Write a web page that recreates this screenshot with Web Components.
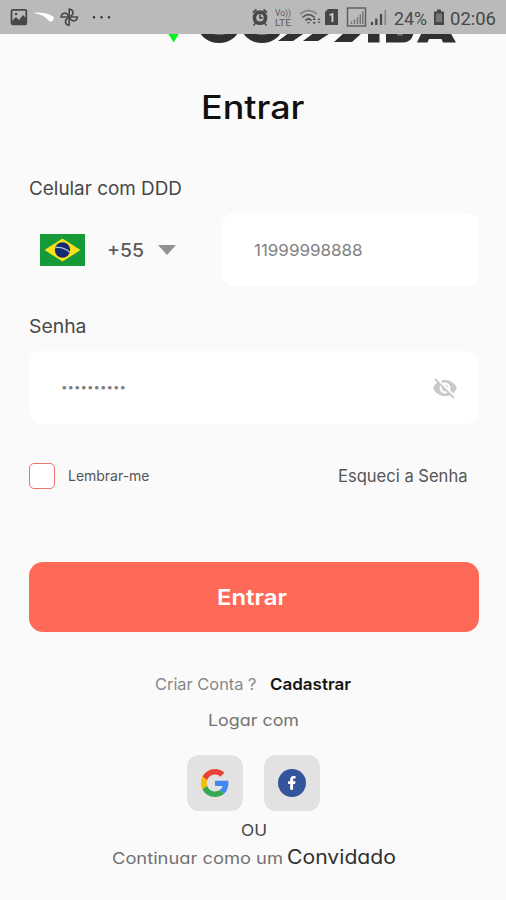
<!DOCTYPE html>
<html lang="pt-BR">
<head>
<meta charset="utf-8">
<meta name="viewport" content="width=device-width, initial-scale=1">
<title>Entrar</title>
<style>
    body{
        margin: 0;
        background: #fafafa;
        font-family: Inter, "Liberation Sans", sans-serif;
    }
</style>
</head>
<body>
<login-page></login-page>

<script>
// one line of text, widened so that it fills the given width
class TextLine extends HTMLElement{
    constructor(){
        super();
        this.attachShadow({ mode: 'open' });
    }

    connectedCallback(){
        this.shadowRoot.innerHTML = `
            <style>
                :host{
                    display: inline-block;
                    white-space: nowrap;
                    flex: none;
                    width: ${this.getAttribute("width")}px;
                    font-size: ${this.getAttribute("size")}px;
                }
                :host([round]){
                    font-feature-settings: "cv11" 1;
                }
                span{
                    display: inline-block;
                    transform-origin: 0 50%;
                }
            </style>
            <span><slot></slot></span>
        `;
        let span = this.shadowRoot.querySelector("span");
        let ratio = Number(this.getAttribute("width")) / span.getBoundingClientRect().width;
        span.style.transform = `scaleX(${ratio})`;
    }
}

class StatusBar extends HTMLElement{
    constructor(){
        super();
        this.attachShadow({ mode: 'open' });
    }

    connectedCallback(){
        this.shadowRoot.innerHTML = `
            <style>
                :host{
                    display: flex;
                    justify-content: space-between;
                    height: 34px;
                    box-sizing: border-box;
                    background: #bababa;
                    color: #484848;
                    position: relative;
                    z-index: 1;
                    font-family: Roboto, "Liberation Sans", sans-serif;
                }
                svg{ display: block; }
                .right{ display: flex; padding-right: 10px; }
                .right text-line{ line-height: 37px; }
                .percent{ margin-left: 6px; }
                .battery{ margin: 0 5px 0 6px; }
            </style>
            <svg width="120" height="34" viewBox="0 0 120 34">
                <rect x="11.5" y="9.8" width="14.8" height="14.6" rx="1.3" fill="none" stroke="#484848" stroke-width="1.8"/>
                <path d="M12 21 16 17 19 20 23 15 26 18v6H12z" fill="#484848"/>
                <circle cx="16" cy="14" r="1.3" fill="#484848"/>
                <path d="M35 12.4C43 12.500 50.500 13.500 53.600 17C54.500 20 51 23.500 48.500 20.500C45 16 40 14.300 35 13.200z" fill="#fff"/>
                <g fill="none" stroke="#484848" stroke-width="1.6" stroke-linejoin="round">
                    <path d="M69.200 17V9C73.500 9.500 74.500 14 70.500 16.300"/>
                    <path d="M69.200 17H77.500C77 21.300 72.500 22.300 69.700 18.300"/>
                    <path d="M69.200 17V25.300C65 24.800 64 20.300 68 17.800"/>
                    <path d="M69.200 17H61C61.500 12.700 66 11.700 68.700 15.700"/>
                </g>
                <g fill="#333"><circle cx="94" cy="17.200" r="1.200"/><circle cx="101.500" cy="17.200" r="1.200"/><circle cx="109" cy="17.200" r="1.200"/></g>
            </svg>
            <div class="right">
                <svg width="137" height="34" viewBox="251 0 137 34">
                    <circle cx="260" cy="17.700" r="5.600" fill="none" stroke="#484848" stroke-width="3.600"/>
                    <path d="M260 14.500V18H263M253 12.500 256.500 9.500M267 12.500 263.500 9.500M255.500 23 253.500 25.500M264.500 23 266.500 25.500" fill="none" stroke="#484848" stroke-width="1.700"/>
                    <g fill="#5a5a5a" font-family="Roboto, sans-serif" font-size="8.5">
                        <text x="275" y="16" textLength="16" lengthAdjust="spacingAndGlyphs">Vo))</text>
                        <text x="275" y="26" textLength="16" lengthAdjust="spacingAndGlyphs">LTE</text>
                    </g>
                    <g fill="none" stroke="#555" stroke-width="1.700">
                        <path d="M300 14Q308.500 7 317 14" stroke="#868686"/>
                        <path d="M302.500 17.300Q308.500 12 314.500 17.300"/>
                        <path d="M305.300 20.500Q308.500 17.500 311.700 20.500"/>
                    </g>
                    <path d="M307 22 308.500 24 310 22zM312.500 20 314.300 17.500 316 20zM312.500 22 314.300 24.500 316 22zM317.500 20 319 18 320.500 20zM317.500 21.500 319 23.500 320.500 21.500z" fill="#555"/>
                    <path d="M328 9H338V25H325V12z" fill="#484848"/>
                    <text x="328.500" y="21.500" fill="#d4d4d4" font-family="Roboto, sans-serif" font-size="12" font-weight="700">1</text>
                    <rect x="347.500" y="8" width="18" height="18" fill="none" stroke="#5d5d5d" stroke-width="1.400"/>
                    <path d="M351.500 24V21.500M354.500 24V19.500M357.500 24V17M360.300 24V14.500M362.800 24V11.500" stroke="#777" stroke-width="1.500"/>
                    <path d="M372 25V22M376.300 25V18.500M381 25V14" stroke="#484848" stroke-width="2.200"/>
                    <path d="M385.300 25V10" stroke="#858585" stroke-width="1.700"/>
                </svg>
                <text-line class="percent" size="19" width="33">24%</text-line>
                <svg class="battery" width="12" height="34" viewBox="0 0 12 34">
                    <path d="M4 9.500H8V11.500H11V25H1V11.500H4z" fill="#484848"/>
                    <path d="M3 13.500H9V22H3z" fill="#777"/>
                </svg>
                <text-line size="19" width="46">02:06</text-line>
            </div>
        `;
    }
}

// wordmark scrolled up underneath the status bar
class BrandLogo extends HTMLElement{
    constructor(){
        super();
        this.attachShadow({ mode: 'open' });
    }

    connectedCallback(){
        this.shadowRoot.innerHTML = `
            <style>
                :host{ display: block; height: 12px; overflow: hidden; }
                svg{ display: block; }
            </style>
            <svg width="506" height="12" viewBox="0 34 506 12">
                <path d="M168 33.500H179L173.700 42.500z" fill="#00f51c"/>
                <g fill="#303030">
                    <ellipse cx="219" cy="25" rx="21" ry="18"/>
                    <ellipse cx="262" cy="25" rx="21" ry="18"/>
                    <path d="M290 32H306L293 41H278zM315 32H332L318 41H303zM345 32H363L352 42H334z"/>
                    <path d="M368 30H379.500V42.500H368zM386 30H414Q413 42.500 403 42.500H386z"/>
                    <path d="M422 32H450L456 42.500H443L441.500 39H429L427.500 42.500H417z"/>
                </g>
                <path d="M213 34H226Q220 36 213 34zM256 34H268Q262 36 256 34zM397 34H403V35.500H397z" fill="#777"/>
            </svg>
        `;
    }
}

class FieldBox extends HTMLElement{
    constructor(){
        super();
        this.attachShadow({ mode: 'open' });
    }

    connectedCallback(){
        this.shadowRoot.innerHTML = `
            <style>
                :host{
                    display: flex;
                    align-items: center;
                    justify-content: space-between;
                    box-sizing: border-box;
                    height: 73px;
                    padding: 0 21px 0 32px;
                    border-radius: 12px;
                    background: #fff;
                    color: #818181;
                }
            </style>
            <slot></slot>
            <slot name="icon"></slot>
        `;
    }
}

class CheckOption extends HTMLElement{
    constructor(){
        super();
        this.attachShadow({ mode: 'open' });
    }

    connectedCallback(){
        this.shadowRoot.innerHTML = `
            <style>
                :host{ display: flex; align-items: center; gap: 13px; }
                i{
                    box-sizing: border-box;
                    width: 26px;
                    height: 26px;
                    border: 1.5px solid #ec7469;
                    border-radius: 5px;
                    background: #fff;
                }
            </style>
            <i></i><slot></slot>
        `;
    }
}

class MainButton extends HTMLElement{
    constructor(){
        super();
        this.attachShadow({ mode: 'open' });
    }

    connectedCallback(){
        this.shadowRoot.innerHTML = `
            <style>
                :host{ display: block; }
                button{
                    display: flex;
                    align-items: center;
                    justify-content: center;
                    width: 100%;
                    height: 70px;
                    padding: 0 2px 0 0;
                    border: 0;
                    border-radius: 14px;
                    background: #ff6a58;
                    color: #fff;
                    font: inherit;
                    font-weight: 600;
                    text-align: left;
                    cursor: pointer;
                }
            </style>
            <button><slot></slot></button>
        `;
    }
}

class SocialTile extends HTMLElement{
    constructor(){
        super();
        this.attachShadow({ mode: 'open' });
    }

    connectedCallback(){
        this.shadowRoot.innerHTML = `
            <style>
                :host{
                    display: flex;
                    align-items: center;
                    justify-content: center;
                    width: 56px;
                    height: 56px;
                    border-radius: 12px;
                    background: #e2e2e2;
                }
            </style>
            <slot></slot>
        `;
    }
}

class LoginPage extends HTMLElement{
    constructor(){
        super();
        this.attachShadow({ mode: 'open' });
    }

    connectedCallback(){
        this.shadowRoot.innerHTML = `
            <style>
                :host{
                    display: block;
                    height: 900px;
                    overflow: hidden;
                    background: #fafafa;
                }
                main{ padding: 0 27px 0 29px; }
                .line{
                    display: flex;
                    align-items: center;
                    height: 24px;
                    line-height: 24px;
                    color: #474747;
                }
                .center{ justify-content: center; }
                .title{ height: 40px; margin-top: 42px; padding-right: 2px; color: #101010; font-weight: 550; }
                .phone{ display: flex; margin-top: 13px; }
                .country{
                    display: flex;
                    align-items: center;
                    width: 193px;
                    box-sizing: border-box;
                    padding-left: 11px;
                    color: #5b5b5b;
                    font-weight: 500;
                }
                .country text-line{ margin: 0 14px 0 22px; }
                .phone field-box{ flex: 1; }
                .options{
                    display: flex;
                    align-items: center;
                    justify-content: space-between;
                    height: 26px;
                    margin-top: 39px;
                    padding-right: 12px;
                    color: #555;
                }
                check-option text-line{ padding-bottom: 2px; }
                main-button{ margin-top: 73px; }
                .signup{ margin-top: 40px; padding-right: 2px; gap: 14px; color: #888; }
                .signup b{ color: #151515; font-weight: 600; }
                .social{ display: flex; justify-content: center; gap: 21px; margin-top: 23px; padding-right: 1px; }
                .guest{ align-items: baseline; gap: 4px; margin-top: 5px; padding-right: 1px; color: #717171; }
                .guest a{ color: #303030; }
                svg{ display: block; flex: none; }
            </style>
            <status-bar></status-bar>
            <brand-logo></brand-logo>
            <main>
                <div class="line center title"><text-line size="32" width="103.5">Entrar</text-line></div>

                <div class="line" style="margin-top:48px"><text-line size="18.5" width="153">Celular com DDD</text-line></div>
                <div class="phone">
                    <div class="country">
                        <svg width="45" height="32" viewBox="0 0 45 32">
                            <rect width="45" height="32" fill="#159a37"/>
                            <path d="M4.500 16 22.500 4.500 40.500 16 22.500 27.500z" fill="#fbe21c"/>
                            <circle cx="22.500" cy="16" r="7.700" fill="#16286f"/>
                            <path d="M15.400 13.500Q23.500 12.500 29.700 18.200" fill="none" stroke="#a9c0d5" stroke-width="1.400"/>
                        </svg>
                        <text-line size="18.5" width="37">+55</text-line>
                        <svg width="18" height="10" viewBox="0 0 18 10"><path d="M0 0H18L9 10z" fill="#929292"/></svg>
                    </div>
                    <field-box><text-line size="16" width="108.5" round>11999998888</text-line></field-box>
                </div>

                <div class="line" style="margin-top:28px"><text-line size="18.5" width="57.5">Senha</text-line></div>
                <field-box style="margin-top:13px">
                    <text-line size="11" width="65" style="padding-bottom:1px">••••••••••</text-line>
                    <svg slot="icon" width="26" height="26" viewBox="0 0 24 24">
                        <path fill="#c9c9c9" d="M12 7c2.760 0 5 2.240 5 5 0 .65-.13 1.260-.36 1.830l2.920 2.920c1.510-1.260 2.700-2.890 3.430-4.750-1.730-4.390-6-7.500-11-7.500-1.400 0-2.740.25-3.980.7l2.160 2.160C10.740 7.130 11.350 7 12 7zM2 4.270l2.280 2.280.46.46C3.080 8.300 1.780 10.020 1 12c1.730 4.390 6 7.500 11 7.500 1.550 0 3.030-.3 4.380-.84l.42.42L19.730 22 21 20.730 3.270 3 2 4.270zM7.530 9.800l1.550 1.550c-.05.21-.08.43-.08.65 0 1.660 1.340 3 3 3 .22 0 .44-.03.65-.08l1.550 1.550c-.67.33-1.410.53-2.200.53-2.760 0-5-2.240-5-5 0-.79.2-1.530.53-2.200zm4.310-.78l3.150 3.150.02-.16c0-1.660-1.340-3-3-3l-.17.01z"/>
                    </svg>
                </field-box>

                <div class="options">
                    <check-option><text-line size="14" width="81.5">Lembrar-me</text-line></check-option>
                    <text-line size="16.8" width="129.5">Esqueci a Senha</text-line>
                </div>

                <main-button><text-line size="22" width="70" style="padding-right:3px">Entrar</text-line></main-button>

                <div class="line center signup">
                    <text-line size="16.5" width="101.5">Criar Conta ?</text-line>
                    <b><text-line size="16.5" width="81">Cadastrar</text-line></b>
                </div>
                <div class="line center" style="margin-top:12px;padding-right:1px;color:#737373"><text-line size="16.5" width="91" round>Logar com</text-line></div>

                <div class="social">
                    <social-tile>
                        <svg width="28" height="28" viewBox="0 0 48 48">
                            <path fill="#ea4335" d="M24 9.500c3.540 0 6.710 1.220 9.210 3.600l6.850-6.850C35.900 2.380 30.470 0 24 0 14.620 0 6.510 5.380 2.560 13.220l7.980 6.190C12.430 13.720 17.740 9.500 24 9.500z"/>
                            <path fill="#4285f4" d="M46.980 24.550c0-1.570-.15-3.090-.38-4.550H24v9.020h12.940c-.58 2.960-2.260 5.480-4.780 7.180l7.730 6c4.510-4.180 7.090-10.360 7.090-17.650z"/>
                            <path fill="#fbbc05" d="M10.530 28.590c-.48-1.450-.76-2.990-.76-4.590s.27-3.140.76-4.590l-7.980-6.190C.92 16.460 0 20.120 0 24s.92 7.540 2.560 10.780l7.970-6.190z"/>
                            <path fill="#34a853" d="M24 48c6.480 0 11.930-2.130 15.890-5.810l-7.730-6c-2.150 1.450-4.920 2.300-8.160 2.300-6.260 0-11.570-4.220-13.470-9.910l-7.980 6.190C6.510 42.620 14.620 48 24 48z"/>
                        </svg>
                    </social-tile>
                    <social-tile>
                        <svg width="28" height="28" viewBox="0 0 28 28">
                            <circle cx="14" cy="14" r="14" fill="#34549b"/>
                            <path fill="#fff" d="M12.200 20.800V14.900H10V12.200H12.200V10.500C12.200 8 13.600 7 15.600 7H17.600V9.500H16.300C15.300 9.500 15.100 10 15.100 10.800V12.200H17.500L17.100 14.900H15.100V20.800z"/>
                        </svg>
                    </social-tile>
                </div>

                <div class="line center" style="height:20px;margin-top:9px;padding-right:1px"><text-line size="16" width="26" round>OU</text-line></div>
                <div class="line center guest">
                    <text-line size="16" width="171" round>Continuar como um</text-line>
                    <a><text-line size="19.5" width="109" round>Convidado</text-line></a>
                </div>
            </main>
        `;
    }
}

customElements.define('text-line', TextLine);
customElements.define('status-bar', StatusBar);
customElements.define('brand-logo', BrandLogo);
customElements.define('field-box', FieldBox);
customElements.define('check-option', CheckOption);
customElements.define('main-button', MainButton);
customElements.define('social-tile', SocialTile);
customElements.define('login-page', LoginPage);
</script>
</body>
</html>
